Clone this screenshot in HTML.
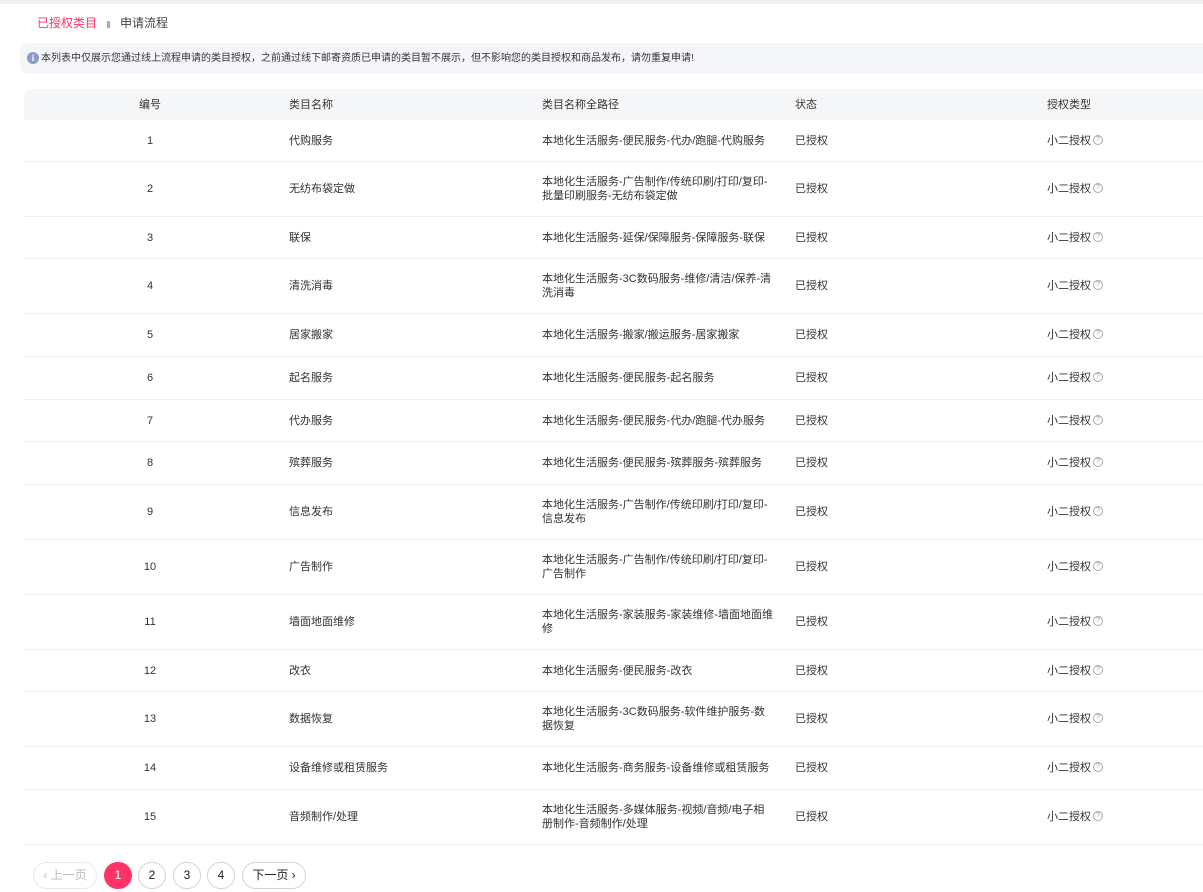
<!DOCTYPE html>
<html><head><meta charset="utf-8"><style>
*{margin:0;padding:0;box-sizing:border-box}
body{width:1203px;height:892px;background:#fff;font-family:"Liberation Sans","Noto Sans CJK SC",sans-serif;color:#333;font-size:11px;overflow:hidden;position:relative}
.top{position:absolute;left:0;top:0;width:1203px;height:4px;background:#eef0f5}
.bc{position:absolute;left:37px;top:15px;font-size:12px;line-height:16px}
.bc .a{color:#ff3366}.bc .s{color:#aaa;margin:0 9px;font-size:9px}.bc .b{color:#444}
.info{position:absolute;left:20px;top:43px;width:1190px;height:31px;background:#f5f6fa;border-radius:8px;font-size:10px;color:#333;line-height:31px;padding-left:21px}
.info i{position:absolute;left:7px;top:9px;width:12px;height:12px;border-radius:50%;background:#8a9bc6;color:#fff;font-style:normal;font-size:9px;line-height:12px;text-align:center;font-weight:bold;font-family:"Liberation Serif",serif}
.thead{position:absolute;left:24px;top:89px;width:1190px;height:31px;background:#f5f6f8;border-radius:8px 8px 0 0}
.row{position:absolute;left:24px;width:1190px;border-bottom:1px solid #eeeff2}
.c{position:absolute;top:50%;transform:translateY(-50%);white-space:nowrap;line-height:14px}
.c0{left:108px;width:36px;text-align:center}.c1{left:265px}.c2{left:518px}.c3{left:771px}.c4{left:1023px}
.q{display:inline-block;width:10px;height:10px;border:1px solid #aaa;border-radius:50%;font-size:7px;line-height:8px;text-align:center;color:#999;margin-left:2px;vertical-align:middle;position:relative;top:-1px}
.pg{position:absolute;top:862px;height:27px;border:1px solid #d2d3da;border-radius:14px;font-size:12px;line-height:25px;text-align:center;color:#222}
</style></head><body>
<div class="top"></div>
<div class="bc"><span class="a">已授权类目</span><span class="s">▮</span><span class="b">申请流程</span></div>
<div class="info"><i>i</i>本列表中仅展示您通过线上流程申请的类目授权，之前通过线下邮寄资质已申请的类目暂不展示，但不影响您的类目授权和商品发布，请勿重复申请!</div>
<div class="thead">
<div class="c c0">编号</div><div class="c c1">类目名称</div><div class="c c2">类目名称全路径</div><div class="c c3">状态</div><div class="c c4">授权类型</div>
</div>
<div class="row" style="top:120px;height:42px"><div class="c c0">1</div><div class="c c1">代购服务</div><div class="c c2">本地化生活服务-便民服务-代办/跑腿-代购服务</div><div class="c c3">已授权</div><div class="c c4">小二授权<span class="q">?</span></div></div>
<div class="row" style="top:162px;height:55px"><div class="c c0">2</div><div class="c c1">无纺布袋定做</div><div class="c c2">本地化生活服务-广告制作/传统印刷/打印/复印-<br>批量印刷服务-无纺布袋定做</div><div class="c c3">已授权</div><div class="c c4">小二授权<span class="q">?</span></div></div>
<div class="row" style="top:217px;height:42px"><div class="c c0">3</div><div class="c c1">联保</div><div class="c c2">本地化生活服务-延保/保障服务-保障服务-联保</div><div class="c c3">已授权</div><div class="c c4">小二授权<span class="q">?</span></div></div>
<div class="row" style="top:259px;height:55px"><div class="c c0">4</div><div class="c c1">清洗消毒</div><div class="c c2">本地化生活服务-3C数码服务-维修/清洁/保养-清<br>洗消毒</div><div class="c c3">已授权</div><div class="c c4">小二授权<span class="q">?</span></div></div>
<div class="row" style="top:314px;height:43px"><div class="c c0">5</div><div class="c c1">居家搬家</div><div class="c c2">本地化生活服务-搬家/搬运服务-居家搬家</div><div class="c c3">已授权</div><div class="c c4">小二授权<span class="q">?</span></div></div>
<div class="row" style="top:357px;height:43px"><div class="c c0">6</div><div class="c c1">起名服务</div><div class="c c2">本地化生活服务-便民服务-起名服务</div><div class="c c3">已授权</div><div class="c c4">小二授权<span class="q">?</span></div></div>
<div class="row" style="top:400px;height:42px"><div class="c c0">7</div><div class="c c1">代办服务</div><div class="c c2">本地化生活服务-便民服务-代办/跑腿-代办服务</div><div class="c c3">已授权</div><div class="c c4">小二授权<span class="q">?</span></div></div>
<div class="row" style="top:442px;height:43px"><div class="c c0">8</div><div class="c c1">殡葬服务</div><div class="c c2">本地化生活服务-便民服务-殡葬服务-殡葬服务</div><div class="c c3">已授权</div><div class="c c4">小二授权<span class="q">?</span></div></div>
<div class="row" style="top:485px;height:55px"><div class="c c0">9</div><div class="c c1">信息发布</div><div class="c c2">本地化生活服务-广告制作/传统印刷/打印/复印-<br>信息发布</div><div class="c c3">已授权</div><div class="c c4">小二授权<span class="q">?</span></div></div>
<div class="row" style="top:540px;height:55px"><div class="c c0">10</div><div class="c c1">广告制作</div><div class="c c2">本地化生活服务-广告制作/传统印刷/打印/复印-<br>广告制作</div><div class="c c3">已授权</div><div class="c c4">小二授权<span class="q">?</span></div></div>
<div class="row" style="top:595px;height:55px"><div class="c c0">11</div><div class="c c1">墙面地面维修</div><div class="c c2">本地化生活服务-家装服务-家装维修-墙面地面维<br>修</div><div class="c c3">已授权</div><div class="c c4">小二授权<span class="q">?</span></div></div>
<div class="row" style="top:650px;height:42px"><div class="c c0">12</div><div class="c c1">改衣</div><div class="c c2">本地化生活服务-便民服务-改衣</div><div class="c c3">已授权</div><div class="c c4">小二授权<span class="q">?</span></div></div>
<div class="row" style="top:692px;height:55px"><div class="c c0">13</div><div class="c c1">数据恢复</div><div class="c c2">本地化生活服务-3C数码服务-软件维护服务-数<br>据恢复</div><div class="c c3">已授权</div><div class="c c4">小二授权<span class="q">?</span></div></div>
<div class="row" style="top:747px;height:43px"><div class="c c0">14</div><div class="c c1">设备维修或租赁服务</div><div class="c c2">本地化生活服务-商务服务-设备维修或租赁服务</div><div class="c c3">已授权</div><div class="c c4">小二授权<span class="q">?</span></div></div>
<div class="row" style="top:790px;height:55px"><div class="c c0">15</div><div class="c c1">音频制作/处理</div><div class="c c2">本地化生活服务-多媒体服务-视频/音频/电子相<br>册制作-音频制作/处理</div><div class="c c3">已授权</div><div class="c c4">小二授权<span class="q">?</span></div></div>
<div class="pg" style="left:33px;width:64px;color:#bbb;border-color:#e8e8ec">‹ 上一页</div>
<div class="pg" style="left:104px;width:28px;background:#ff3366;border-color:#ff3366;color:#fff">1</div>
<div class="pg" style="left:138px;width:28px">2</div>
<div class="pg" style="left:173px;width:28px">3</div>
<div class="pg" style="left:207px;width:28px">4</div>
<div class="pg" style="left:242px;width:64px">下一页 ›</div>
</body></html>
